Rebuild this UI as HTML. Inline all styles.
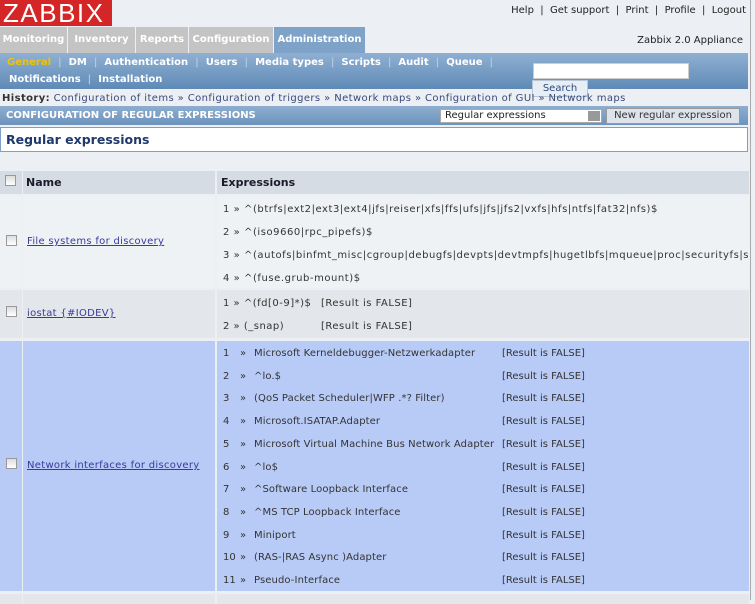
<!DOCTYPE html>
<html><head><style>
*{margin:0;padding:0;box-sizing:border-box}
body{width:755px;height:600px;overflow:hidden;background:#eceff3;font-family:"DejaVu Sans",Verdana,sans-serif;font-size:10px;color:#1a1a2a;position:relative}
.a{position:absolute;white-space:nowrap}
.logo{left:0;top:0;width:112px;height:26px;background:#d42626;color:#fff;font-family:"Liberation Sans",sans-serif;font-size:26px;line-height:26px;padding-left:3px;letter-spacing:1.5px}
.top{right:9px;top:5px;font-size:10px;color:#222}
.tab{top:27px;height:26px;line-height:26px;font-weight:bold;color:#fff;background:#c4c4c4;text-align:center;font-size:10px}
.sub{left:0;top:53px;width:748px;height:36px;background:linear-gradient(#8fb0d2,#5f8ab6)}
.sm{font-weight:bold;color:#fff;font-size:10px}
.sep{color:#b5c9de}
.hdr{left:0;top:106px;width:748px;height:19px;background:linear-gradient(#8eaed0,#6c93bd);color:#fff;font-weight:bold;line-height:19px;padding-left:6px}
.cell{position:absolute}
.cb{position:absolute;width:11px;height:11px;border:1px solid #999;background:linear-gradient(#ddd,#fff)}
a{color:#3a3a9a;text-decoration:underline;letter-spacing:0.3px}
</style></head><body>
<div class="a logo">ZABBIX</div>
<div class="a top">Help &nbsp;|&nbsp; Get support &nbsp;|&nbsp; Print &nbsp;|&nbsp; Profile &nbsp;|&nbsp; Logout</div>
<div class="a tab" style="left:0;width:67px">Monitoring</div>
<div class="a tab" style="left:68px;width:67px">Inventory</div>
<div class="a tab" style="left:136px;width:52px">Reports</div>
<div class="a tab" style="left:189px;width:84px">Configuration</div>
<div class="a tab" style="left:274px;width:91px;background:#7fa3c8">Administration</div>
<div class="a" style="right:12px;top:35px;color:#222">Zabbix 2.0 Appliance</div>
<div class="a sub"></div>
<div class="a sm" style="left:7px;top:57px"><span style="color:#f2c200">General</span> <span class="sep">&nbsp;|&nbsp;</span> DM <span class="sep">&nbsp;|&nbsp;</span> Authentication <span class="sep">&nbsp;|&nbsp;</span> Users <span class="sep">&nbsp;|&nbsp;</span> Media types <span class="sep">&nbsp;|&nbsp;</span> Scripts <span class="sep">&nbsp;|&nbsp;</span> Audit <span class="sep">&nbsp;|&nbsp;</span> Queue <span class="sep">&nbsp;|</span></div>
<div class="a sm" style="left:9px;top:74px">Notifications <span class="sep">&nbsp;|&nbsp;</span> Installation</div>
<div class="a" style="left:533px;top:63px;width:156px;height:16px;background:#fff;border:1px solid #ccc"></div>
<div class="a" style="left:532px;top:80px;width:56px;height:17px;background:#e8eef5;border:1px solid #b9c6d6;color:#2a4a7a;text-align:center;line-height:15px;font-size:10px">Search</div>
<div class="a" style="left:2px;top:93px;color:#333;letter-spacing:0.4px"><b>History:</b> <span style="color:#3a4a7a">Configuration of items » Configuration of triggers » Network maps » Configuration of GUI » Network maps</span></div>
<div class="a hdr">CONFIGURATION OF REGULAR EXPRESSIONS</div>
<div class="a" style="left:440px;top:109px;width:162px;height:14px;background:#fff;border:1px solid #aaa;color:#222;padding-left:4px;line-height:12px">Regular expressions<span style="position:absolute;right:1px;top:1px;width:12px;height:10px;background:#999"></span></div>
<div class="a" style="left:606px;top:108px;width:134px;height:16px;background:#dde3ea;border:1px solid #999;color:#333;text-align:center;line-height:14px">New regular expression</div>
<div class="a" style="left:0;top:127px;width:748px;height:25px;background:#fff;border:1px solid #7f9fc4;font-weight:bold;font-size:12.5px;color:#1f3a6a;line-height:23px;padding-left:5px">Regular expressions</div>

<div class="cell" style="left:0;top:171px;width:22px;height:23px;background:#d6dce3"></div>
<div class="cell" style="left:23px;top:171px;width:192px;height:23px;background:#d6dce3;font-weight:bold;font-size:11px;line-height:23px;padding-left:3px">Name</div>
<div class="cell" style="left:217px;top:171px;width:532px;height:23px;background:#d6dce3;font-weight:bold;font-size:11px;line-height:23px;padding-left:4px">Expressions</div>
<div class="cb" style="left:5px;top:175px"></div>

<div class="cell" style="left:0;top:196px;width:22px;height:92px;background:#eff2f5"></div>
<div class="cell" style="left:23px;top:196px;width:192px;height:92px;background:#eff2f5"></div>
<div class="cell" style="left:217px;top:196px;width:532px;height:92px;background:#eff2f5"></div>
<div class="cb" style="left:6px;top:235px"></div>
<div class="a" style="left:27px;top:236px"><a>File systems for discovery</a></div>
<div class="a" style="left:223px;top:198px;width:526px;overflow:hidden;line-height:23px;color:#333;letter-spacing:0.55px">1 » ^(btrfs|ext2|ext3|ext4|jfs|reiser|xfs|ffs|ufs|jfs|jfs2|vxfs|hfs|ntfs|fat32|nfs)$<br>2 » ^(iso9660|rpc_pipefs)$<br>3 » ^(autofs|binfmt_misc|cgroup|debugfs|devpts|devtmpfs|hugetlbfs|mqueue|proc|securityfs|sysfs)$<br>4 » ^(fuse.grub-mount)$</div>

<div class="cell" style="left:0;top:290px;width:22px;height:48px;background:#e3e6ea"></div>
<div class="cell" style="left:23px;top:290px;width:192px;height:48px;background:#e3e6ea"></div>
<div class="cell" style="left:217px;top:290px;width:532px;height:48px;background:#e3e6ea"></div>
<div class="cb" style="left:6px;top:306px"></div>
<div class="a" style="left:27px;top:308px"><a>iostat {#IODEV}</a></div>
<div class="a" style="left:223px;top:292px;line-height:23px;color:#333;letter-spacing:0.5px">1 » ^(fd[0-9]*)$ <span style="position:absolute;left:98px">[Result is FALSE]</span><br>2 » (_snap)<span style="position:absolute;left:98px;top:23px">[Result is FALSE]</span></div>

<div class="cell" style="left:0;top:341px;width:22px;height:250px;background:#b8cbf7"></div>
<div class="cell" style="left:23px;top:341px;width:192px;height:250px;background:#b8cbf7"></div>
<div class="cell" style="left:217px;top:341px;width:532px;height:250px;background:#b8cbf7"></div>
<div class="cb" style="left:6px;top:458px"></div>
<div class="a" style="left:27px;top:460px"><a>Network interfaces for discovery</a></div>
<div class="a" style="left:223px;top:343px;line-height:22.7px;color:#333">1<br>2<br>3<br>4<br>5<br>6<br>7<br>8<br>9<br>10<br>11</div>
<div class="a" style="left:240px;top:343px;line-height:22.7px;color:#333">»<br>»<br>»<br>»<br>»<br>»<br>»<br>»<br>»<br>»<br>»</div>
<div class="a" style="left:254px;top:343px;line-height:22.7px;color:#333;letter-spacing:0.1px">Microsoft Kerneldebugger-Netzwerkadapter<br>^lo.$<br>(QoS Packet Scheduler|WFP .*? Filter)<br>Microsoft.ISATAP.Adapter<br>Microsoft Virtual Machine Bus Network Adapter<br>^lo$<br>^Software Loopback Interface<br>^MS TCP Loopback Interface<br>Miniport<br>(RAS-|RAS Async )Adapter<br>Pseudo-Interface</div>
<div class="a" style="left:502px;top:343px;line-height:22.7px;color:#333">[Result is FALSE]<br>[Result is FALSE]<br>[Result is FALSE]<br>[Result is FALSE]<br>[Result is FALSE]<br>[Result is FALSE]<br>[Result is FALSE]<br>[Result is FALSE]<br>[Result is FALSE]<br>[Result is FALSE]<br>[Result is FALSE]</div>

<div class="cell" style="left:0;top:594px;width:22px;height:10px;background:#e3e6ea"></div>
<div class="cell" style="left:23px;top:594px;width:192px;height:10px;background:#e3e6ea"></div>
<div class="cell" style="left:217px;top:594px;width:532px;height:10px;background:#e3e6ea"></div>
<div class="a" style="left:750px;top:0;width:1px;height:600px;background:#aaa"></div>
</body></html>
